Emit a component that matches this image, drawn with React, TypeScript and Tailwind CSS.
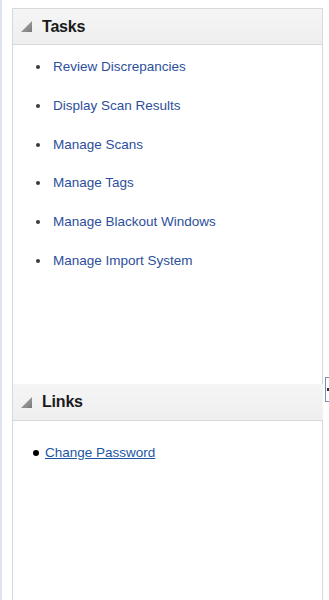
import React from 'react'

const tasks = [
  'Review Discrepancies',
  'Display Scan Results',
  'Manage Scans',
  'Manage Tags',
  'Manage Blackout Windows',
  'Manage Import System',
]

function Triangle() {
  return (
    <svg width="11" height="11" viewBox="0 0 11 11" aria-hidden="true">
      <defs>
        <linearGradient id="tri" x1="0" y1="0" x2="1" y2="1">
          <stop offset="0" stopColor="#b0b0b0" />
          <stop offset="1" stopColor="#7a7a7a" />
        </linearGradient>
      </defs>
      <polygon points="0,11 11,11 11,0" fill="url(#tri)" />
    </svg>
  )
}

function PanelHeader({ title, top }: { title: string; top?: boolean }) {
  return (
    <div
      className={
        'h-[37px] flex items-center gap-[10px] pl-[8px] bg-gradient-to-b from-[#f5f5f5] to-[#efefef] border-b border-[#d6d9dc] ' +
        (top ? 'border-t border-x border-[#d6d9dc] w-[311px]' : 'w-[310px]')
      }
    >
      <Triangle />
      <span className="text-[16px] font-bold text-[#1a1a1a] tracking-[-0.2px]">{title}</span>
    </div>
  )
}

export default function App() {
  return (
    <div
      className="relative flex h-[600px] w-[329px] bg-white overflow-hidden"
      style={{ fontFamily: '"Liberation Sans", Arial, sans-serif' }}
    >
      {/* left frame edge */}
      <div className="w-[2px] h-full bg-[#dce3ea]" />
      <div className="w-[10px]" />

      <div className="flex flex-col pt-[8px] h-full">
        <PanelHeader title="Tasks" top />

        <div className="h-[339px] w-[311px] border-x border-[#d6d9dc]">
          <ul className="pt-[3px] pl-[23px]">
            {tasks.map((t) => (
              <li key={t} className="h-[38.7px] flex items-center">
                <span className="w-[4px] h-[4px] rounded-full bg-[#3a3a3a] mr-[13px]" />
                <a className="text-[13.5px] text-[#2c4f9c] cursor-pointer">{t}</a>
              </li>
            ))}
          </ul>
        </div>

        <div className="border-l border-[#d6d9dc] w-[311px]">
          <PanelHeader title="Links" />
        </div>

        <div className="flex-1 w-[311px] border-x border-[#d6d9dc]">
          <ul className="pt-[21px] pl-[20px]">
            <li className="h-[22px] flex items-center">
              <span className="w-[6px] h-[6px] rounded-full bg-black mr-[6px]" />
              <a className="text-[13.5px] text-[#1c56a3] underline cursor-pointer">Change Password</a>
            </li>
          </ul>
        </div>
      </div>

      {/* splitter handle */}
      <div className="absolute left-[325px] top-[377px] w-[8px] h-[25px] border border-[#7d91a6] bg-white flex items-center pl-[1px]">
        <span className="w-[3px] h-[3px] bg-[#333]" />
      </div>
    </div>
  )
}
